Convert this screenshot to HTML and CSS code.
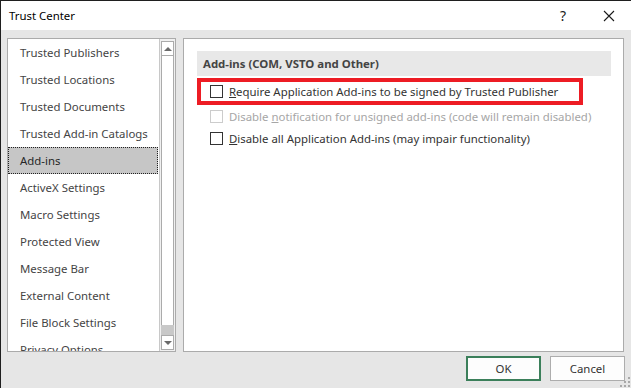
FILE: index.html
```html
<!DOCTYPE html>
<html lang="en">
<head>
    <meta charset="UTF-8">
    <title>Trust Center</title>
    <link rel="stylesheet" href="styles.css">
</head>
<body>
<div class="window">
    <div class="titlebar">
        <span class="title">Trust Center</span>
        <span class="help">?</span>
        <span class="close">
            <svg width="12" height="12" viewBox="0 0 12 12"><path d="M1 1L11 11M11 1L1 11" stroke="#1a1a1a" stroke-width="1.1" fill="none"/></svg>
        </span>
    </div>
    <div class="content">
        <div class="nav">
            <ul class="nav-list">
                <li>Trusted Publishers</li>
                <li>Trusted Locations</li>
                <li>Trusted Documents</li>
                <li>Trusted Add-in Catalogs</li>
                <li class="selected">Add-ins</li>
                <li>ActiveX Settings</li>
                <li>Macro Settings</li>
                <li>Protected View</li>
                <li>Message Bar</li>
                <li>External Content</li>
                <li>File Block Settings</li>
                <li>Privacy Options</li>
            </ul>
            <div class="scrollbar">
                <div class="sb-btn"><span class="arrow-up"></span></div>
                <div class="sb-thumb"></div>
                <div class="sb-track"></div>
                <div class="sb-btn"><span class="arrow-down"></span></div>
            </div>
        </div>
        <div class="panel">
            <div class="section-head">Add-ins (COM, VSTO and Other)</div>
            <div class="option highlight">
                <span class="box"></span>
                <span><u>R</u>equire Application Add-ins to be signed by Trusted Publisher</span>
            </div>
            <div class="option disabled">
                <span class="box"></span>
                <span>Disable <u>n</u>otification for unsigned add-ins (code will remain disabled)</span>
            </div>
            <div class="option">
                <span class="box"></span>
                <span><u>D</u>isable all Application Add-ins (may impair functionality)</span>
            </div>
        </div>
    </div>
    <div class="footer">
        <button class="btn btn-default">OK</button>
        <button class="btn">Cancel</button>
        <svg class="grip" width="10" height="10" viewBox="0 0 10 10">
            <rect x="8" y="0" width="2" height="2" fill="#a8a8a8"/>
            <rect x="4" y="4" width="2" height="2" fill="#a8a8a8"/>
            <rect x="8" y="4" width="2" height="2" fill="#a8a8a8"/>
            <rect x="0" y="8" width="2" height="2" fill="#a8a8a8"/>
            <rect x="4" y="8" width="2" height="2" fill="#a8a8a8"/>
            <rect x="8" y="8" width="2" height="2" fill="#a8a8a8"/>
        </svg>
    </div>
</div>
</body>
</html>
```

FILE: styles.css
```css
html, body {
    margin: 0;
    padding: 0;
}

body {
    font-family: "Noto Sans", "Open Sans", sans-serif;
    font-size: 11.4px;
    color: #444;
}

.window {
    width: 631px;
    height: 388px;
    box-sizing: border-box;
    border-top: 1px solid #1f1f1f;
    border-left: 1px solid #1f1f1f;
    background-color: #e6e6e6;
    display: flex;
    flex-direction: column;
    overflow: hidden;
}

.titlebar {
    height: 29px;
    background-color: #fff;
    display: flex;
    align-items: center;
    flex-shrink: 0;
}

.title {
    color: #000;
    padding-left: 8px;
    flex: 1;
}

.help {
    color: #1a1a1a;
    font-size: 14px;
    width: 14px;
    margin-right: 29px;
}

.close {
    display: flex;
    margin-right: 16px;
}

.content {
    display: flex;
    gap: 7px;
    padding: 8px 7px 0 6px;
    height: 314px;
}

.nav {
    width: 169px;
    box-sizing: border-box;
    border: 1px solid #ababab;
    background-color: #fff;
    display: flex;
}

.nav-list {
    list-style: none;
    margin: 0;
    padding: 0;
    flex: 1;
    overflow: hidden;
}

.nav-list li {
    height: 27px;
    line-height: 25px;
    padding-left: 11px;
    margin-right: 1px;
    box-sizing: border-box;
    border: 1px solid transparent;
    white-space: nowrap;
}

.nav-list li.selected {
    background-color: #c6c6c6;
    border: 1px dotted #222;
    color: #262626;
}

.scrollbar {
    width: 16px;
    box-sizing: border-box;
    border-left: 1px solid #c8c8c8;
    background-color: #f0f0f0;
    padding: 2px 1px 1px 1px;
    display: flex;
    flex-direction: column;
}

.sb-btn {
    height: 15px;
    box-sizing: border-box;
    border: 1px solid #ababab;
    background-color: #fff;
    display: flex;
    align-items: center;
    justify-content: center;
}

.sb-thumb {
    flex: 1;
    border: 1px solid #ababab;
    border-top: none;
    border-bottom: none;
    background-color: #fff;
}

.sb-track {
    height: 10px;
    background-color: #c8c8c8;
}

.arrow-up {
    width: 0;
    height: 0;
    border-left: 4px solid transparent;
    border-right: 4px solid transparent;
    border-bottom: 4px solid #6a6a6a;
}

.arrow-down {
    width: 0;
    height: 0;
    border-left: 4px solid transparent;
    border-right: 4px solid transparent;
    border-top: 4px solid #6a6a6a;
}

.panel {
    flex: 1;
    box-sizing: border-box;
    border: 1px solid #ababab;
    background-color: #fff;
    padding: 12px 12px 0 13px;
}

.section-head {
    background-color: #e8e8e8;
    height: 25px;
    line-height: 25px;
    padding-left: 6px;
    font-weight: bold;
    color: #444;
    margin-bottom: 2px;
}

.option {
    display: flex;
    align-items: center;
    gap: 6px;
    height: 22px;
    padding-left: 13px;
    color: #333;
    white-space: nowrap;
}

.option.highlight {
    height: 27px;
    width: 386px;
    box-sizing: border-box;
    border: 4px solid #ed1c24;
    padding-left: 9px;
}

.box {
    width: 13px;
    height: 13px;
    box-sizing: border-box;
    border: 1px solid #333;
    background-color: #fff;
    flex-shrink: 0;
}

.option.disabled {
    color: #a6a6a6;
}

.option.disabled .box {
    border-color: #cccccc;
}

.footer {
    flex: 1;
    display: flex;
    justify-content: flex-end;
    align-items: flex-start;
    gap: 9px;
    padding: 4px 6px 0 0;
    position: relative;
}

.btn {
    width: 75px;
    height: 25px;
    font-family: "Noto Sans", "Open Sans", sans-serif;
    font-size: 11.4px;
    color: #333;
    background-color: #fdfdfd;
    border: 1px solid #adadad;
    padding: 0;
}

.btn-default {
    border: 2px solid #3b7f5a;
}

.grip {
    position: absolute;
    right: 1px;
    bottom: 1px;
}
```
